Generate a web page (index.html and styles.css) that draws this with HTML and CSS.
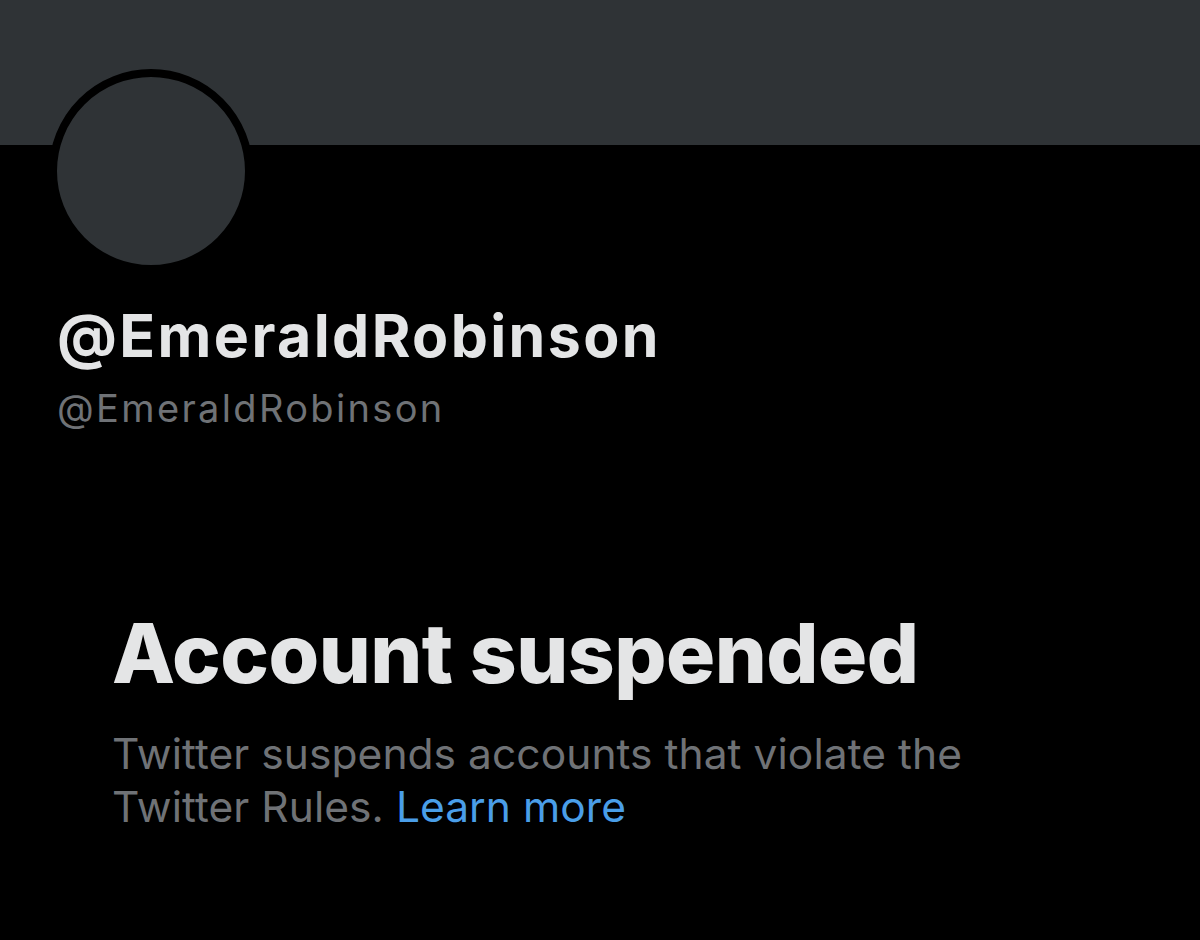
FILE: index.html
```html
<!DOCTYPE html>
<html lang="en">
<head>
<meta charset="utf-8">
<title>@EmeraldRobinson</title>
<link rel="stylesheet" href="styles.css">
</head>
<body>
<div class="banner"></div>
<div class="profile">
  <div class="avatar"></div>
  <div class="name">@EmeraldRobinson</div>
  <div class="handle">@EmeraldRobinson</div>
</div>
<div class="notice">
  <h1 class="title">Account suspended</h1>
  <p class="desc">Twitter suspends accounts that violate the Twitter Rules. <a class="link" href="#">Learn more</a></p>
</div>
</body>
</html>
```
FILE: styles.css
```css
html, body {
  margin: 0;
  padding: 0;
  background: #000;
  height: 100%;
  overflow: hidden;
}
body {
  font-family: Inter, "Noto Sans", sans-serif;
  width: 1200px;
}
.banner {
  height: 145px;
  background: #2f3336;
}
.profile {
  padding-left: 49px;
}
.avatar {
  width: 188px;
  height: 188px;
  border: 8px solid #000;
  border-radius: 50%;
  background: #2f3336;
  margin-top: -76px;
}
.name {
  margin-top: 28px;
  padding-left: 8px;
  font-size: 59px;
  font-weight: 700;
  line-height: 70px;
  color: #e4e5e6;
  letter-spacing: 2.4px;
  white-space: nowrap;
}
.handle {
  margin-top: 12px;
  padding-left: 8px;
  font-size: 38px;
  font-weight: 400;
  line-height: 50px;
  color: #6f7276;
  letter-spacing: 2.35px;
  white-space: nowrap;
}
.notice {
  padding: 0 0 0 112px;
  margin-top: 171px;
}
.title {
  margin: 0;
  font-size: 82px;
  font-weight: 800;
  line-height: 100px;
  color: #e4e5e6;
  letter-spacing: -0.55px;
  white-space: nowrap;
}
.desc {
  margin: 23px 0 0 0;
  width: 900px;
  font-size: 42.5px;
  line-height: 53px;
  color: #6f7276;
  letter-spacing: 0.05px;
}
.link {
  color: #4a9ee8;
  text-decoration: none;
}
```
